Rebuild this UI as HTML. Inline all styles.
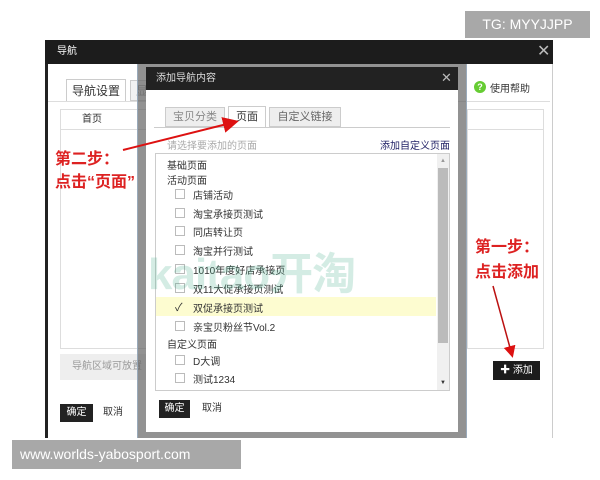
<!DOCTYPE html><html><head><meta charset="utf-8"><style>
*{margin:0;padding:0;box-sizing:border-box}
body{width:600px;height:480px;background:#fff;position:relative;overflow:hidden;font-family:"Liberation Sans","Noto Sans CJK SC",sans-serif;font-size:10px;color:#333}
.a{position:absolute}
.cb{position:absolute;width:10px;height:10px;border:1px solid #bbb;background:#fff}
.it{position:absolute;font-size:10px;color:#333;white-space:nowrap}
</style></head><body>
<div class="a" style="left:465px;top:11px;width:125px;height:27px;background:#a8a8a8;color:#fff;font-size:14px;line-height:27px;text-align:center">TG: MYYJJPP</div>
<div class="a" style="left:45px;top:40px;width:508px;height:398px;background:#fff;border-left:3px solid #222;border-right:1px solid #ccc"></div>
<div class="a" style="left:45px;top:40px;width:508px;height:24px;background:#1c1c1c;color:#fff;font-size:10px;line-height:24px;padding-left:12px">导航</div>
<div class="a" style="left:537px;top:41px;color:#bbb;font-size:16px">✕</div>
<div class="a" style="left:66px;top:79px;width:60px;height:22px;border:1px solid #ccc;border-bottom:none;background:#fff;font-size:12px;line-height:22px;text-align:center">导航设置</div>
<div class="a" style="left:130px;top:80px;width:60px;height:21px;border:1px solid #ccc;background:#f2f2f2;color:#999;font-size:12px;line-height:21px;text-align:center">显示设置</div>
<div class="a" style="left:48px;top:101px;width:502px;height:1px;background:#ddd"></div>
<div class="a" style="left:60px;top:109px;width:145px;height:240px;border:1px solid #ddd"></div>
<div class="a" style="left:60px;top:110px;width:145px;height:20px;border-bottom:1px solid #ddd;font-size:10px;line-height:20px;padding-left:22px">首页</div>
<div class="a" style="left:60px;top:354px;width:145px;height:26px;background:#eee;color:#999;font-size:10px;line-height:26px;padding-left:12px">导航区域可放置</div>
<div class="a" style="left:60px;top:404px;width:33px;height:18px;background:#222;color:#fff;font-size:10px;line-height:18px;text-align:center">确定</div>
<div class="a" style="left:103px;top:404px;font-size:10px;line-height:18px">取消</div>
<div class="a" style="left:474px;top:81px;width:12px;height:12px;border-radius:50%;background:#6c3;color:#fff;font-size:9px;line-height:12px;text-align:center;font-weight:bold">?</div>
<div class="a" style="left:490px;top:80px;font-size:10px">使用帮助</div>
<div class="a" style="left:467px;top:109px;width:77px;height:240px;border:1px solid #ddd"></div>
<div class="a" style="left:467px;top:129px;width:77px;height:1px;background:#ddd"></div>
<div class="a" style="left:493px;top:361px;width:47px;height:19px;background:#1c1c1c;color:#fff;font-size:10px;line-height:19px;text-align:center">✚ 添加</div>
<div class="a" style="left:137px;top:64px;width:330px;height:374px;background:rgba(100,100,100,.7);border-left:1px solid #9ab;border-right:1px solid #9ab"></div>
<div class="a" style="left:146px;top:67px;width:312px;height:365px;background:#fff"></div>
<div class="a" style="left:146px;top:67px;width:312px;height:23px;background:#222;color:#ddd;font-size:10px;line-height:23px;padding-left:10px">添加导航内容</div>
<div class="a" style="left:441px;top:70px;color:#bbb;font-size:13px">✕</div>
<div class="a" style="left:165px;top:107px;width:60px;height:20px;background:#eee;border:1px solid #ccc;color:#888;font-size:11px;line-height:19px;text-align:center">宝贝分类</div>
<div class="a" style="left:228px;top:106px;width:38px;height:22px;background:#fff;border:1px solid #ccc;border-bottom:none;font-size:11px;line-height:20px;text-align:center">页面</div>
<div class="a" style="left:269px;top:107px;width:72px;height:20px;background:#eee;border:1px solid #ccc;color:#666;font-size:11px;line-height:19px;text-align:center">自定义链接</div>
<div class="a" style="left:154px;top:127px;width:296px;height:1px;background:#ccc"></div>
<div class="a" style="left:167px;top:137px;color:#aaa;font-size:10px">请选择要添加的页面</div>
<div class="a" style="left:380px;top:137px;color:#226;font-size:10px">添加自定义页面</div>
<div class="a" style="left:155px;top:153px;width:295px;height:238px;border:1px solid #ccc"></div>
<div class="a" style="left:437px;top:154px;width:12px;height:236px;background:#f0f0f0"></div>
<div class="a" style="left:438px;top:168px;width:10px;height:175px;background:#bbb"></div>
<div class="a" style="left:440px;top:158px;font-size:6px;color:#999">▲</div>
<div class="a" style="left:440px;top:380px;font-size:6px;color:#333">▼</div>
<div class="a" style="left:156px;top:297px;width:280px;height:19px;background:#fdfcd0"></div>
<div class="it" style="left:167px;top:157px">基础页面</div>
<div class="it" style="left:167px;top:172px">活动页面</div>
<div class="cb" style="left:175px;top:189px"></div><div class="it" style="left:193px;top:187px">店铺活动</div>
<div class="cb" style="left:175px;top:208px"></div><div class="it" style="left:193px;top:206px">淘宝承接页测试</div>
<div class="cb" style="left:175px;top:226px"></div><div class="it" style="left:193px;top:224px">同店转让页</div>
<div class="cb" style="left:175px;top:245px"></div><div class="it" style="left:193px;top:243px">淘宝并行测试</div>
<div class="cb" style="left:175px;top:264px"></div><div class="it" style="left:193px;top:262px">1010年度好店承接页</div>
<div class="cb" style="left:175px;top:283px"></div><div class="it" style="left:193px;top:281px">双11大促承接页测试</div>
<div class="it" style="left:175px;top:299px;font-size:11px">✓</div><div class="it" style="left:193px;top:300px">双促承接页测试</div>
<div class="cb" style="left:175px;top:321px"></div><div class="it" style="left:193px;top:319px">亲宝贝粉丝节Vol.2</div>
<div class="it" style="left:167px;top:336px">自定义页面</div>
<div class="cb" style="left:175px;top:355px"></div><div class="it" style="left:193px;top:353px">D大调</div>
<div class="cb" style="left:175px;top:373px"></div><div class="it" style="left:193px;top:371px">测试1234</div>
<div class="a" style="left:159px;top:400px;width:31px;height:18px;background:#222;color:#fff;font-size:10px;line-height:18px;text-align:center">确定</div>
<div class="a" style="left:202px;top:400px;font-size:10px;line-height:18px">取消</div>
<div class="a" style="left:148px;top:238px;font-size:44px;font-weight:bold;color:rgba(60,170,130,.22);letter-spacing:-1px;white-space:nowrap">kaitao开淘</div>
<div class="a" style="left:55px;top:148px;color:#d22;font-size:16px;font-weight:bold;line-height:23px">第二步：<br>点击“页面”</div>
<div class="a" style="left:475px;top:235px;color:#d22;font-size:16px;font-weight:bold;line-height:25px">第一步：<br>点击添加</div>
<svg class="a" style="left:0;top:0" width="600" height="480"><defs><marker id="m" markerWidth="8" markerHeight="8" refX="6" refY="4" orient="auto"><path d="M0,0L8,4L0,8Z" fill="#d11"/></marker></defs>
<line x1="123" y1="150" x2="235" y2="122" stroke="#d11" stroke-width="2" marker-end="url(#m)"/>
<line x1="493" y1="286" x2="512" y2="355" stroke="#b11" stroke-width="1.5" marker-end="url(#m)"/></svg>
<div class="a" style="left:12px;top:440px;width:229px;height:29px;background:#a8a8a8;color:#fff;font-size:14px;line-height:29px;padding-left:8px">www.worlds-yabosport.com</div>
</body></html>
